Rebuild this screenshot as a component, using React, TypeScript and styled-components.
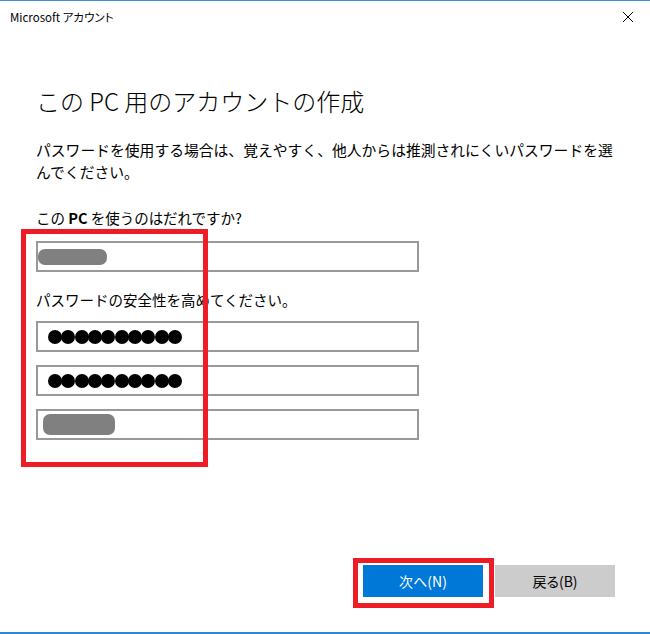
import styled, { createGlobalStyle } from 'styled-components';

const GlobalStyle = createGlobalStyle`
  html, body {
    margin: 0;
    padding: 0;
    background: #ffffff;
    overflow: hidden;
  }
  body {
    font-family: "Noto Sans CJK JP", "Noto Sans", sans-serif;
    color: #000000;
  }
`;

const Window = styled.div`
  position: relative;
  width: 650px;
  height: 634px;
  display: flex;
  flex-direction: column;
  box-sizing: border-box;
  border-top: 1px solid #3f8fd6;
  border-bottom: 2px solid #2f86d2;
  background: #ffffff;
`;

const TitleBar = styled.div`
  height: 31px;
  display: flex;
  align-items: center;
  justify-content: space-between;
  padding: 0 16px 0 10px;
  font-size: 11.5px;
  font-feature-settings: "palt";
  color: #000;
`;

const CloseButton = styled.button`
  border: 0;
  background: transparent;
  padding: 0;
  width: 12px;
  height: 12px;
  display: flex;
  cursor: pointer;
`;

const Content = styled.div`
  flex: 1;
  display: flex;
  flex-direction: column;
  padding: 53px 35px 35px 36px;
`;

const Heading = styled.h1`
  margin: 0;
  font-size: 24px;
  line-height: 32px;
  font-weight: 300;
  white-space: nowrap;
`;

const Lead = styled.p`
  margin: 22px 0 0;
  font-size: 14.8px;
  line-height: 22px;
  white-space: nowrap;
`;

const Label = styled.div<{ $gap: number }>`
  margin-top: ${(p) => p.$gap}px;
  font-size: 14.5px;
  line-height: 20px;
  white-space: nowrap;
`;

const Latin = styled.span`
  font-weight: 600;
`;

const Field = styled.div<{ $gap: number }>`
  margin-top: ${(p) => p.$gap}px;
  width: 383px;
  height: 31px;
  box-sizing: border-box;
  border: 2px solid #999999;
  display: flex;
  align-items: center;
`;

const Blob = styled.div<{ $w: number; $h: number; $x: number }>`
  width: ${(p) => p.$w}px;
  height: ${(p) => p.$h}px;
  margin-left: ${(p) => p.$x}px;
  border-radius: 7px;
  background: #808080;
  filter: blur(0.6px);
`;

const Dots = styled.div`
  display: flex;
  padding-left: 10px;
`;

const Dot = styled.span`
  width: 14px;
  height: 14px;
  border-radius: 50%;
  background: #000;
  & + & {
    margin-left: -0.7px;
  }
`;

const Footer = styled.div`
  margin-top: auto;
  display: flex;
  justify-content: flex-end;
  gap: 12px;
`;

const Button = styled.button<{ $primary?: boolean }>`
  width: 120px;
  height: 32px;
  border: 0;
  padding: 0;
  font-family: inherit;
  font-feature-settings: "palt";
  font-size: 14px;
  background: ${(p) => (p.$primary ? '#0078d7' : '#cccccc')};
  color: ${(p) => (p.$primary ? '#ffffff' : '#000000')};
  cursor: pointer;
`;

const Marker = styled.div<{ $x: number; $y: number; $w: number; $h: number }>`
  position: absolute;
  left: ${(p) => p.$x}px;
  top: ${(p) => p.$y}px;
  width: ${(p) => p.$w}px;
  height: ${(p) => p.$h}px;
  box-sizing: border-box;
  border: 5px solid #ee1c25;
  pointer-events: none;
`;

function Password() {
  return (
    <Dots>
      {Array.from({ length: 10 }).map((_, i) => (
        <Dot key={i} />
      ))}
    </Dots>
  );
}

export default function App() {
  return (
    <>
      <GlobalStyle />
      <Window>
        <TitleBar>
          <span>Microsoft アカウント</span>
          <CloseButton aria-label="閉じる">
            <svg width="12" height="12" viewBox="0 0 12 12">
              <path d="M1 1 L11 11 M11 1 L1 11" stroke="#000" strokeWidth="1" />
            </svg>
          </CloseButton>
        </TitleBar>
        <Content>
          <Heading>この PC 用のアカウントの作成</Heading>
          <Lead>
            パスワードを使用する場合は、覚えやすく、他人からは推測されにくいパスワードを選
            <br />
            んでください。
          </Lead>
          <Label $gap={25}>
            この <Latin>PC</Latin> を使うのはだれですか?
          </Label>
          <Field $gap={13}>
            <Blob $w={69} $h={16} $x={0} />
          </Field>
          <Label $gap={18}>パスワードの安全性を高めてください。</Label>
          <Field $gap={11}>
            <Password />
          </Field>
          <Field $gap={13}>
            <Password />
          </Field>
          <Field $gap={13}>
            <Blob $w={72} $h={21} $x={5} />
          </Field>
          <Footer>
            <Button $primary>次へ(N)</Button>
            <Button>戻る(B)</Button>
          </Footer>
        </Content>
        <Marker $x={21} $y={228} $w={187} $h={238} />
        <Marker $x={353} $y={557} $w={141} $h={50} />
      </Window>
    </>
  );
}
